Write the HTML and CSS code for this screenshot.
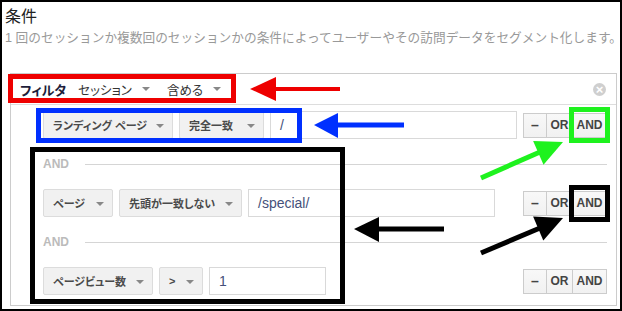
FILE: index.html
```html
<!DOCTYPE html>
<html lang="ja">
<head>
    <meta charset="UTF-8">
    <meta name="viewport" content="width=device-width, initial-scale=1.0">
    <title>条件</title>
    <link rel="stylesheet" href="styles.css">
</head>
<body>

    <div class="shot">
        <h1 class="title">条件</h1>
        <p class="subtitle">1 回のセッションか複数回のセッションかの条件によってユーザーやその訪問データをセグメント化します。</p>

        <div class="panel">
            <!-- フィルタの見出し -->
            <div class="panel-header">
                <span class="filter-label">フィルタ</span>
                <span class="hdr-select">セッション<i class="caret"></i></span>
                <span class="hdr-select">含める<i class="caret"></i></span>
                <span class="close-icon">&times;</span>
            </div>

            <div class="rules">
                <div class="rule">
                    <div class="dropdown w130">ランディング ページ<i class="caret"></i></div>
                    <div class="dropdown w85">完全一致<i class="caret"></i></div>
                    <div class="value w247">/</div>
                    <div class="btn-group">
                        <span class="btn btn-minus">&ndash;</span>
                        <span class="btn btn-or">OR</span>
                        <span class="btn btn-and">AND</span>
                    </div>
                </div>

                <div class="separator"><span>AND</span></div>

                <div class="rule">
                    <div class="dropdown w70">ページ<i class="caret"></i></div>
                    <div class="dropdown w123">先頭が一致しない<i class="caret"></i></div>
                    <div class="value w247">/special/</div>
                    <div class="btn-group">
                        <span class="btn btn-minus">&ndash;</span>
                        <span class="btn btn-or">OR</span>
                        <span class="btn btn-and">AND</span>
                    </div>
                </div>

                <div class="separator"><span>AND</span></div>

                <div class="rule">
                    <div class="dropdown w110">ページビュー数<i class="caret"></i></div>
                    <div class="dropdown w44">&gt;<i class="caret"></i></div>
                    <div class="value w117">1</div>
                    <div class="btn-group">
                        <span class="btn btn-minus">&ndash;</span>
                        <span class="btn btn-or">OR</span>
                        <span class="btn btn-and">AND</span>
                    </div>
                </div>
            </div>
        </div>

        <!-- 注釈(枠と矢印) -->
        <svg class="notes" width="622" height="311" viewBox="0 0 622 311">
            <rect x="10.5" y="76.5" width="223" height="24" fill="none" stroke="#ee0000" stroke-width="5"/>
            <line x1="274" y1="89" x2="340" y2="89" stroke="#ee0000" stroke-width="4"/>
            <polygon points="250,89 276,77 276,101" fill="#ee0000"/>

            <rect x="38.5" y="110.5" width="261" height="30" fill="none" stroke="#0030ff" stroke-width="5"/>
            <line x1="336" y1="125" x2="404" y2="125" stroke="#0030ff" stroke-width="5"/>
            <polygon points="314,125 338,113 338,138" fill="#0030ff"/>

            <rect x="571.5" y="109.5" width="36" height="31" fill="none" stroke="#1ef21e" stroke-width="5"/>
            <line x1="481" y1="178" x2="540" y2="152" stroke="#1ef21e" stroke-width="5"/>
            <polygon points="563,142 543.5,164.8 533.1,141" fill="#1ef21e"/>

            <rect x="32.5" y="149.5" width="310" height="152" fill="none" stroke="#000" stroke-width="5"/>
            <line x1="377" y1="229" x2="444" y2="229" stroke="#000" stroke-width="5"/>
            <polygon points="354,229 379,217 379,242" fill="#000"/>

            <rect x="571.5" y="187.5" width="36" height="32" fill="none" stroke="#000" stroke-width="5"/>
            <line x1="481" y1="253" x2="540" y2="228" stroke="#000" stroke-width="5"/>
            <polygon points="563,218 543.3,240.6 533.1,216.6" fill="#000"/>
        </svg>
    </div>

</body>
</html>
```

FILE: styles.css
```css
body {
    margin: 0;
    background: #fff;
    font-family: "Liberation Sans", "Noto Sans CJK JP", sans-serif;
}
.shot {
    position: relative;
    width: 622px;
    height: 311px;
    box-sizing: border-box;
    border: 2px solid #000;
    padding: 6px 0 0 3px;
    overflow: hidden;
}
.title {
    margin: 0;
    font-size: 16px;
    line-height: 18px;
    font-weight: normal;
    color: #222;
}
.subtitle {
    margin: 4px 0 0;
    font-size: 12.7px;
    line-height: 16px;
    color: #999;
    white-space: nowrap;
}
.panel {
    margin: 27px 0 0 5px;
    width: 607px;
    height: 233px;
    box-sizing: border-box;
    border: 1px solid #ccc;
}
.panel-header {
    display: flex;
    align-items: center;
    height: 30px;
    padding-left: 9px;
    border-bottom: 1px solid #ddd;
    font-size: 12.5px;
    font-feature-settings: "palt";
    color: #333;
}
.filter-label {
    color: #1d1d3a;
    font-weight: bold;
    font-size: 13px;
    margin-right: 12px;
}
.hdr-select {
    display: flex;
    align-items: center;
    margin-right: 17px;
}
.hdr-select .caret {
    margin-left: 10px;
}
.close-icon {
    margin-left: auto;
    margin-right: 10px;
    width: 13px;
    height: 13px;
    border-radius: 50%;
    background: #cfcfcf;
    color: #fff;
    font-size: 13px;
    font-weight: bold;
    line-height: 13px;
    text-align: center;
}
.caret {
    display: inline-block;
    flex: none;
    width: 0;
    height: 0;
    border-left: 4px solid transparent;
    border-right: 4px solid transparent;
    border-top: 4px solid #888;
}
.rules {
    padding: 6px 9px 0 32px;
}
.rule {
    display: flex;
    align-items: center;
    gap: 6px;
    height: 28px;
}
.dropdown {
    display: flex;
    align-items: center;
    height: 28px;
    box-sizing: border-box;
    padding: 0 8px 0 9px;
    background: #f1f1f1;
    border: 1px solid #dcdcdc;
    border-radius: 2px;
    font-size: 11px;
    font-weight: bold;
    font-feature-settings: "palt";
    color: #4a4a4a;
    white-space: nowrap;
}
.dropdown .caret {
    margin-left: auto;
    margin-top: 2px;
}
.value {
    height: 28px;
    box-sizing: border-box;
    padding-left: 9px;
    border: 1px solid #d9d9d9;
    font-size: 14px;
    line-height: 26px;
    color: #45507a;
}
.w44 { width: 44px; }
.w70 { width: 70px; }
.w85 { width: 85px; }
.w110 { width: 110px; }
.w117 { width: 117px; }
.w123 { width: 123px; }
.w130 { width: 130px; }
.w247 { width: 247px; }
.btn-group {
    display: flex;
    margin-left: auto;
}
.btn {
    height: 25px;
    box-sizing: border-box;
    border: 1px solid #ccc;
    background: linear-gradient(#f8f8f8, #f1f1f1);
    font-size: 12px;
    font-weight: bold;
    line-height: 23px;
    text-align: center;
    color: #444;
}
.btn + .btn {
    border-left: none;
}
.btn-minus {
    width: 24px;
    font-size: 14px;
}
.btn-or { width: 26px; }
.btn-and { width: 34px; }
.separator {
    display: flex;
    align-items: center;
    height: 16px;
    margin: 17px 0;
    font-size: 12px;
    font-weight: bold;
    color: #bbb;
}
.separator::after {
    content: "";
    flex: 1;
    height: 1px;
    margin-left: 16px;
    background: #d5d5d5;
}
.notes {
    position: absolute;
    top: -2px;
    left: -2px;
    pointer-events: none;
}
```
